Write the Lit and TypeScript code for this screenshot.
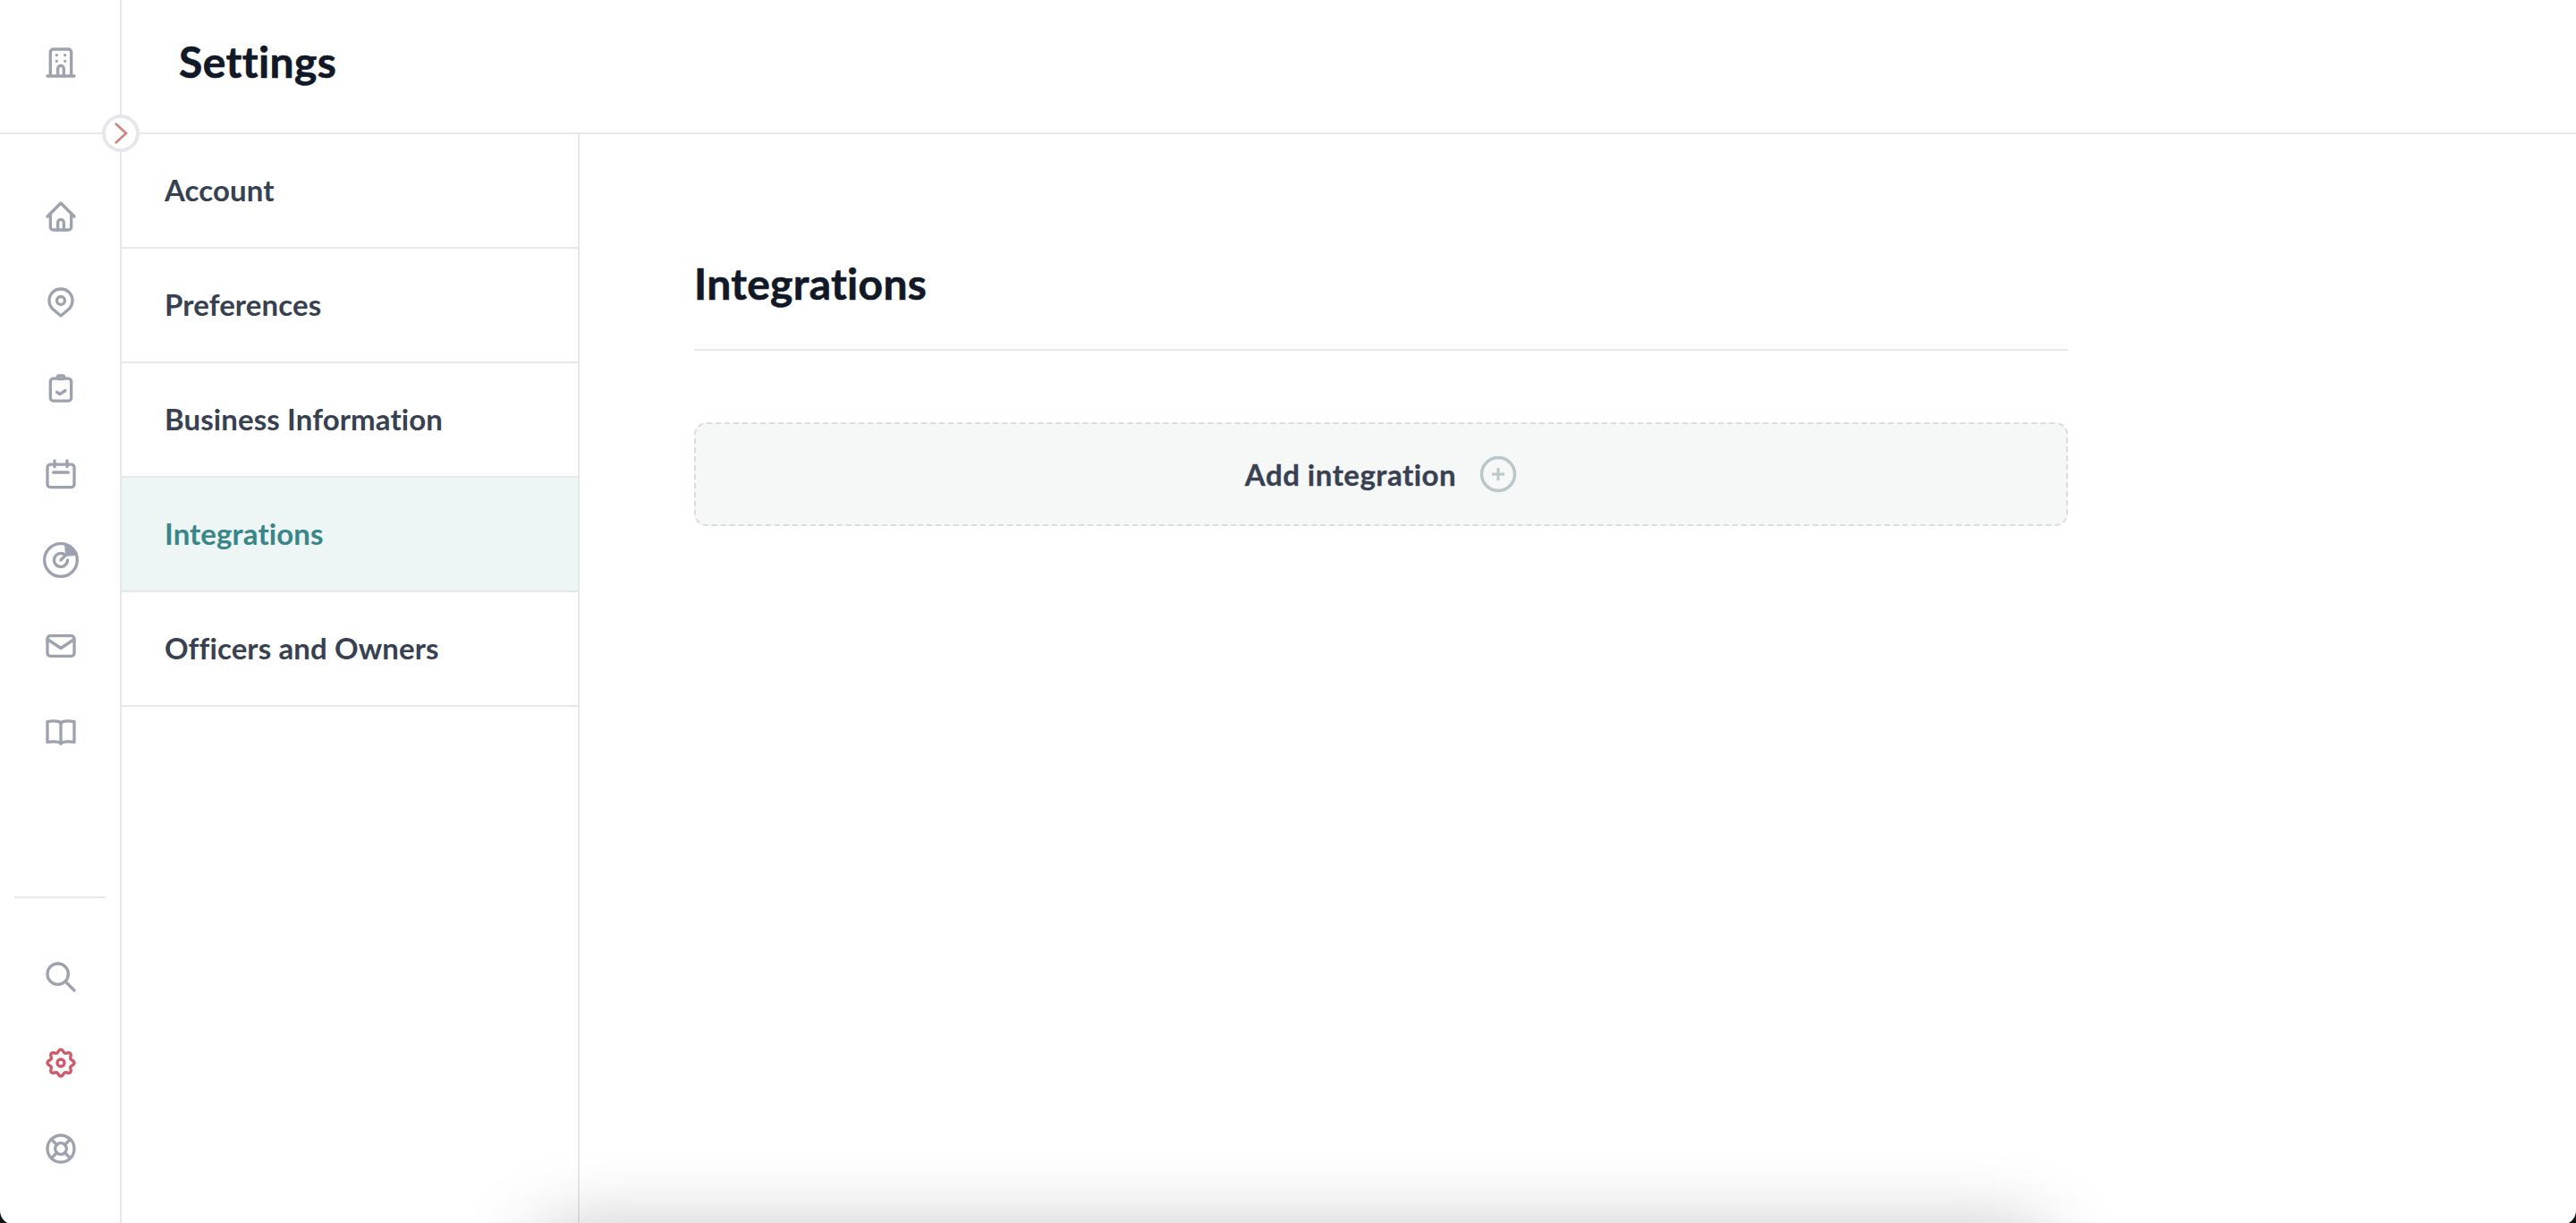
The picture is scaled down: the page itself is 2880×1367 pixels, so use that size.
import { LitElement, html, css, svg } from "lit";
import { customElement } from "lit/decorators.js";

const ic = (c: unknown) => html`<svg class="ic" viewBox="0 0 24 24" fill="none" stroke="currentColor" stroke-width="2" stroke-linecap="round" stroke-linejoin="round">${c}</svg>`;

const gearPath = (() => {
  const pts: string[] = [];
  for (let i = 0; i < 96; i++) {
    const a = (i / 96) * Math.PI * 2;
    const r = 8 + 1 * Math.cos(8 * a);
    pts.push(`${(12 + r * Math.sin(a)).toFixed(2)} ${(12 - r * Math.cos(a)).toFixed(2)}`);
  }
  return "M" + pts.join("L") + "z";
})();

const top = [
  svg`<path d="M3 12l9-9 9 9"/><path d="M5 10v9a2 2 0 0 0 2 2h10a2 2 0 0 0 2-2v-9"/><path d="M10 21v-5a2 2 0 0 1 4 0v5"/>`,
  svg`<path d="M12 21l-5.200-4.400a7.800 7.800 0 1 1 10.400 0z"/><circle cx="12" cy="10.800" r="2.700"/>`,
  svg`<rect x="5" y="5.500" width="14" height="15" rx="2"/><rect x="9.700" y="3.500" width="4.600" height="2.200" rx="1.100" fill="#fff"/><path d="M9.300 14.500l2 1.500 3.700-2.500"/>`,
  svg`<rect x="3" y="5.500" width="18" height="15.300" rx="2"/><path d="M7.800 3v4M16.200 3v4M7 10.800h10"/>`,
  svg`<circle cx="12" cy="12" r="11"/><path d="M14.200 8.100A4.500 4.500 0 1 0 16.500 12"/><path d="M12 12l4-4"/><path d="M15.500 2l7 6-6.500.5z" fill="currentColor"/>`,
  svg`<rect x="3" y="5.200" width="18" height="13.600" rx="2"/><path d="M3 7.500l9 6 9-6"/>`,
  svg`<path d="M12 6C10.500 4.800 7 4.500 3 5.200V19c4-.7 7.500-.5 9 1 1.500-1.500 5-1.700 9-1V5.200C17 4.500 13.500 4.800 12 6zM12 6v14"/>`,
];
const bottom = [
  svg`<circle cx="10" cy="10" r="7"/><path d="M15 15l6 6"/>`,
  svg`<path class="gear" d="${gearPath}"/><circle class="gear" cx="12" cy="12" r="2.400"/>`,
  svg`<circle cx="12" cy="12" r="9"/><circle cx="12" cy="12" r="3.800"/><path d="M5.600 5.600l3.700 3.700M18.400 5.600l-3.700 3.700M5.600 18.400l3.700-3.700M18.400 18.400l-3.700-3.700"/>`,
];

@customElement("app-root")
export class AppRoot extends LitElement {
  static styles = css`
    :host { display: block; height: 100vh; background: #0f1412; font-family: "Lato", "Liberation Sans", sans-serif; overflow: hidden; }
    .page { position: relative; height: calc(100vh + 2px); overflow: hidden; background: #fff; border-radius: 0 0 16px 16px; display: grid; grid-template-columns: 136px 512px 1fr; grid-template-rows: 150px 1fr; }
    .brand { border-right: 2px solid #e5e7eb; border-bottom: 2px solid #e5e7eb; display: flex; align-items: center; justify-content: center; color: #9ca3af; padding: 0 0 8px 2px; }
    .head { grid-column: 2 / 4; border-bottom: 2px solid #e5e7eb; display: flex; align-items: center; padding-left: 64px; padding-bottom: 11px; box-sizing: border-box; }
    h1 { margin: 0; font-size: 48px; font-weight: 700; color: #111827; letter-spacing: 0.4px; -webkit-text-stroke: 0.6px #111827; }
    .rail { border-right: 2px solid #e5e7eb; display: flex; flex-direction: column; align-items: center; color: #9ca3af; padding-top: 72px; box-sizing: border-box; }
    .rail .group { display: flex; flex-direction: column; gap: 56px; align-items: center; padding-left: 2px; }
    .spacer { flex: 1; }
    .sep { width: 102px; height: 2px; background: #e5e7eb; margin-bottom: 68px; }
    .bot { margin-bottom: 65px; }
    .ic { width: 40px; height: 40px; display: block; }
    .gear { stroke: #cf5a66; }
    .nav { border-right: 2px solid #e5e7eb; }
    .item { height: 128px; box-sizing: border-box; border-bottom: 2px solid #e5e7eb; display: flex; align-items: center; padding: 0 0 3px 48px; font-size: 33px; font-weight: 700; color: #374151; letter-spacing: 0.1px; }
    .item.on { background: #edf6f5; color: #38858a; }
    .main { position: relative; padding: 0 0 0 128px; }
    .content { width: 1536px; }
    h2 { margin: 0; height: 242px; box-sizing: border-box; padding-top: 138px; border-bottom: 2px solid #e5e7eb; font-size: 48px; line-height: 58px; font-weight: 700; color: #111827; letter-spacing: 0.3px; -webkit-text-stroke: 0.6px #111827; }
    .add { margin-top: 80px; height: 116px; box-sizing: border-box; border: 2px dashed #d5dde0; border-radius: 14px; background: #f6f8f8; display: flex; align-items: center; justify-content: center; gap: 26px; padding-bottom: 1px; font-size: 33px; font-weight: 700; color: #374151; letter-spacing: 0.5px; -webkit-text-stroke: 0.3px #374151; }
    .add svg { width: 42px; height: 42px; color: #b9c6ca; display: block; }
    .toggle { position: absolute; left: 114px; top: 128px; width: 42px; height: 42px; box-sizing: border-box; border-radius: 50%; background: #fff; border: 4px solid #e5e7eb; display: flex; align-items: center; justify-content: center; color: #cc8680; }
    .toggle svg { width: 22px; height: 26px; display: block; }
    .shade { position: absolute; left: 606px; width: 1677px; top: 1384px; height: 60px; box-shadow: 0 0 90px rgba(0,0,0,.33); pointer-events: none; }
  `;
  render() {
    const items = ["Account", "Preferences", "Business Information", "Integrations", "Officers and Owners"];
    return html`<div class="page">
      <div class="brand">${ic(svg`<path d="M3 21h18M5 21V5a2 2 0 0 1 2-2h10a2 2 0 0 1 2 2v16"/><path d="M9.200 7h.01M14.800 7h.01M9.200 11h.01M14.800 11h.01"/><path d="M10 21v-5a2 2 0 0 1 4 0v5"/>`)}</div>
      <div class="head"><h1>Settings</h1></div>
      <div class="rail">
        <div class="group">${top.map(ic)}</div>
        <div class="spacer"></div>
        <div class="sep"></div>
        <div class="group bot">${bottom.map(ic)}</div>
      </div>
      <div class="nav">${items.map((t) => html`<div class="item ${t === "Integrations" ? "on" : ""}">${t}</div>`)}</div>
      <div class="main"><div class="content">
        <h2>Integrations</h2>
        <div class="add">Add integration
          <svg viewBox="0 0 42 42" fill="none" stroke="currentColor" stroke-width="3.500"><circle cx="21" cy="21" r="18.500"/><path stroke-width="3" d="M21 14v14M14 21h14"/></svg>
        </div>
      </div></div>
      <div class="toggle"><svg viewBox="0 0 22 26" fill="none" stroke="currentColor" stroke-width="2.700"><path d="M5 2l12 11L5 24"/></svg></div>
      <div class="shade"></div>
    </div>`;
  }
}
